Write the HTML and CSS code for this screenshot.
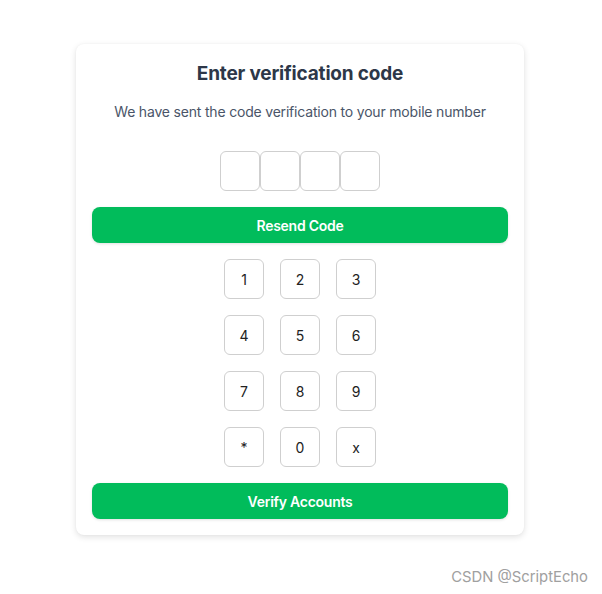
FILE: index.html
```html
<!DOCTYPE html>
<html lang="en">
<head>
<meta charset="utf-8">
<title>Verification</title>
<link rel="stylesheet" href="styles.css">
</head>
<body>
<main class="page">
  <section class="card">
    <h1 class="title">Enter verification code</h1>
    <p class="subtitle">We have sent the code verification to your mobile number</p>
    <div class="code-inputs">
      <input class="code-box" type="text" maxlength="1">
      <input class="code-box" type="text" maxlength="1">
      <input class="code-box" type="text" maxlength="1">
      <input class="code-box" type="text" maxlength="1">
    </div>
    <button class="btn-primary">Resend Code</button>
    <div class="keypad">
      <button class="key">1</button>
      <button class="key">2</button>
      <button class="key">3</button>
      <button class="key">4</button>
      <button class="key">5</button>
      <button class="key">6</button>
      <button class="key">7</button>
      <button class="key">8</button>
      <button class="key">9</button>
      <button class="key">*</button>
      <button class="key">0</button>
      <button class="key">x</button>
    </div>
    <button class="btn-primary">Verify Accounts</button>
  </section>
</main>
<div class="watermark">CSDN @ScriptEcho</div>
</body>
</html>
```
FILE: styles.css
```css
* { box-sizing: border-box; }
html, body { margin: 0; padding: 0; background: #fff; }
body {
  font-family: Inter, "Liberation Sans", Arial, sans-serif;
  width: 602px;
  height: 594px;
  position: relative;
  overflow: hidden;
}
.page {
  display: flex;
  justify-content: center;
  padding: 44px 2px 0 0;
}
.card {
  width: 448px;
  background: #fff;
  border-radius: 8px;
  box-shadow: 0 2px 6px rgba(0,0,0,0.12), 0 0 2px rgba(0,0,0,0.04);
  padding: 16px 16px 16px;
  display: flex;
  flex-direction: column;
  align-items: center;
}
.title {
  margin: 0;
  font-size: 19px;
  line-height: 28px;
  letter-spacing: -0.18px;
  font-weight: 700;
  color: #2d3748;
}
.subtitle {
  margin: 14px 0 0;
  font-size: 14px;
  line-height: 20px;
  letter-spacing: -0.19px;
  color: #4a5568;
}
.code-inputs {
  display: flex;
  margin-top: 29px;
}
.code-box {
  width: 40px;
  height: 40px;
  border: 1px solid #cfcfcf;
  border-radius: 6px;
  margin: 0;
  padding: 0;
  font-size: 16px;
  text-align: center;
  background: #fff;
}
.btn-primary {
  width: 100%;
  height: 36px;
  border: none;
  border-radius: 8px;
  background: #01bc5b;
  color: #fff;
  font-family: inherit;
  font-size: 14px;
  font-weight: 600;
  letter-spacing: -0.25px;
  box-shadow: 0 1px 3px rgba(0,0,0,0.12);
  margin-top: 16px;
  padding: 0;
}
.keypad {
  display: grid;
  grid-template-columns: repeat(3, 40px);
  gap: 16px;
  margin-top: 16px;
}
.key {
  width: 40px;
  height: 40px;
  border: 1px solid #cfcfcf;
  border-radius: 6px;
  background: #fff;
  font-family: inherit;
  font-size: 14px;
  color: #222;
  padding: 0;
}
.watermark {
  position: absolute;
  right: 14px;
  bottom: 8px;
  font-size: 14.8px;
  color: #a0a0a0;
}
```
